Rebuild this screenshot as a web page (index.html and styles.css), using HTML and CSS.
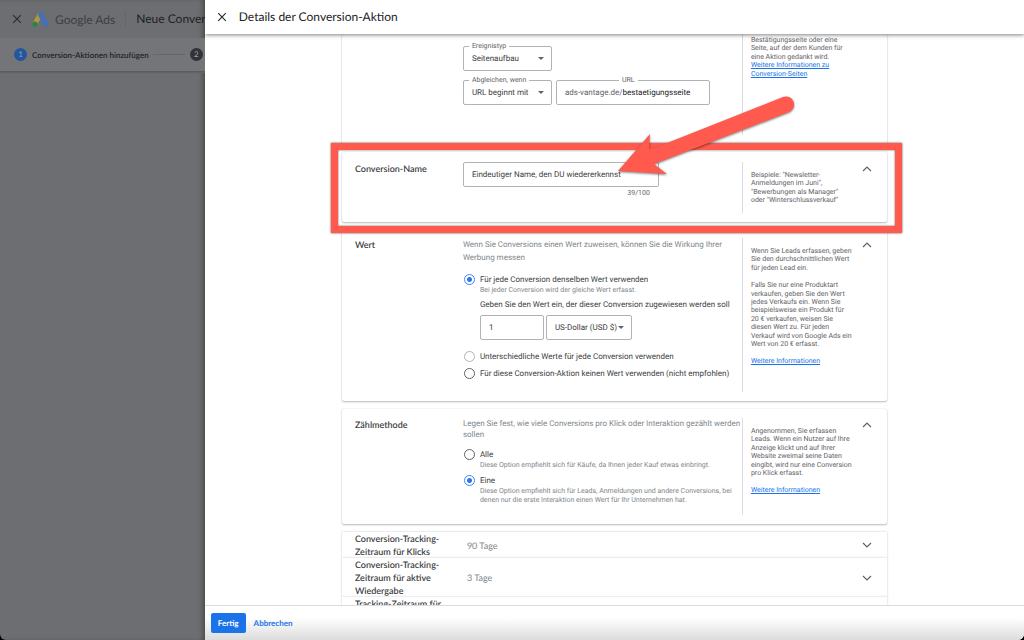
FILE: index.html
```html
<!DOCTYPE html>
<html lang="de">
<head>
<meta charset="utf-8">
<title>Google Ads – Details der Conversion-Aktion</title>
<link rel="stylesheet" href="styles.css">
</head>
<body>
<div class="app">
  <aside class="backdrop">
    <div class="topbar">
      <svg class="close" viewBox="0 0 10 10"><path d="M1.2 1.2l7.6 7.6M8.8 1.2L1.2 8.8"/></svg>
      <svg class="logo" viewBox="0 0 17 15">
        <path d="M7.6 3.4L3 11.6" stroke="#b3983a" stroke-width="4.8" stroke-linecap="round"/>
        <path d="M8.8 2.9L13.8 12" stroke="#4470b8" stroke-width="5.2" stroke-linecap="round"/>
        <circle cx="3" cy="12" r="2.6" fill="#2f8049"/>
      </svg>
      <span class="brand">Google Ads</span>
      <span class="topbar-title">Neue Conversion-Aktion</span>
    </div>
    <div class="stepper">
      <span class="step-dot active">1</span>
      <span class="step-label">Conversion-Aktionen hinzufügen</span>
      <span class="step-line"></span>
      <span class="step-dot">2</span>
    </div>
  </aside>

  <main class="dialog">
    <header class="dialog-head">
      <button class="icon-btn" aria-label="Schließen"><svg class="close" viewBox="0 0 10 10"><path d="M1.2 1.2l7.6 7.6M8.8 1.2L1.2 8.8"/></svg></button>
      <h1>Details der Conversion-Aktion</h1>
    </header>

    <div class="scroller">
      <div class="cards">
        <section class="card card-page">
          <div class="content match">
            <div class="field w-select">
              <label for="event">Ereignistyp</label>
              <select id="event"><option>Seitenaufbau</option></select>
            </div>
            <div class="row">
              <div class="field w-select">
                <label for="rule">Abgleichen, wenn</label>
                <select id="rule"><option>URL beginnt mit</option></select>
              </div>
              <div class="field w-url">
                <label class="centered" for="url">URL</label>
                <span class="prefix">ads-vantage.de/</span>
                <input id="url" value="bestaetigungsseite">
              </div>
            </div>
          </div>
          <div class="help">
            <p>Bestätigungsseite oder eine<br>Seite, auf der dem Kunden für<br>eine Aktion gedankt wird.<br><a href="#">Weitere Informationen zu<br>Conversion-Seiten</a></p>
          </div>
        </section>

        <section class="card card-name">
          <h2>Conversion-Name</h2>
          <div class="content">
            <div class="field w-name">
              <input id="name" aria-label="Conversion-Name" value="Eindeutiger Name, den DU wiedererkennst">
            </div>
            <div class="counter">39/100</div>
          </div>
          <div class="help">
            <p>Beispiele: "Newsletter-<br>Anmeldungen im Juni",<br>"Bewerbungen als Manager"<br>oder "Winterschlussverkauf"</p>
          </div>
          <button class="toggle" aria-label="Einklappen"><svg viewBox="0 0 10 6"><path d="M1 5l4-4 4 4"/></svg></button>
          <div class="highlight"></div>
          <svg class="arrow" viewBox="0 0 190 100">
            <path d="M8 78 L40 41 L39 56 Q47 55 57 50 L173 4 A8 8 0 0 1 179 19 L44 71 L57 81 Z"/>
          </svg>
        </section>

        <section class="card card-value">
          <h2>Wert</h2>
          <div class="content">
            <p class="intro roomy">Wenn Sie Conversions einen Wert zuweisen, können Sie die Wirkung Ihrer Werbung messen</p>
            <div class="options">
              <div class="option">
                <input type="radio" name="value" id="v1" checked>
                <div class="option-body">
                  <label for="v1">Für jede Conversion denselben Wert verwenden</label>
                  <p class="hint">Bei jeder Conversion wird der gleiche Wert erfasst.</p>
                  <label class="amount-label" for="amount">Geben Sie den Wert ein, der dieser Conversion zugewiesen werden soll</label>
                  <div class="row tight">
                    <div class="field w-amount"><input id="amount" value="1"></div>
                    <div class="field w-currency"><select aria-label="Währung"><option>US-Dollar (USD $)</option></select></div>
                  </div>
                </div>
              </div>
              <div class="option after-fields">
                <input type="radio" name="value" id="v2" class="faded">
                <label for="v2">Unterschiedliche Werte für jede Conversion verwenden</label>
              </div>
              <div class="option">
                <input type="radio" name="value" id="v3">
                <label for="v3">Für diese Conversion-Aktion keinen Wert verwenden (nicht empfohlen)</label>
              </div>
            </div>
          </div>
          <div class="help">
            <p>Wenn Sie Leads erfassen, geben<br>Sie den durchschnittlichen Wert<br>für jeden Lead ein.</p>
            <p>Falls Sie nur eine Produktart<br>verkaufen, geben Sie den Wert<br>jedes Verkaufs ein. Wenn Sie<br>beispielsweise ein Produkt für<br>20 € verkaufen, weisen Sie<br>diesen Wert zu. Für jeden<br>Verkauf wird von Google Ads ein<br>Wert von 20 € erfasst.</p>
            <p><a href="#">Weitere Informationen</a></p>
          </div>
          <button class="toggle" aria-label="Einklappen"><svg viewBox="0 0 10 6"><path d="M1 5l4-4 4 4"/></svg></button>
        </section>

        <section class="card card-count">
          <h2>Zählmethode</h2>
          <div class="content">
            <p class="intro">Legen Sie fest, wie viele Conversions pro Klick oder Interaktion gezählt werden sollen</p>
            <div class="options">
              <div class="option">
                <input type="radio" name="count" id="c1">
                <div class="option-body">
                  <label for="c1">Alle</label>
                  <p class="hint">Diese Option empfiehlt sich für Käufe, da Ihnen jeder Kauf etwas einbringt.</p>
                </div>
              </div>
              <div class="option">
                <input type="radio" name="count" id="c2" checked>
                <div class="option-body">
                  <label for="c2">Eine</label>
                  <p class="hint">Diese Option empfiehlt sich für Leads, Anmeldungen und andere Conversions, bei denen nur die erste Interaktion einen Wert für Ihr Unternehmen hat.</p>
                </div>
              </div>
            </div>
          </div>
          <div class="help">
            <p>Angenommen, Sie erfassen<br>Leads. Wenn ein Nutzer auf Ihre<br>Anzeige klickt und auf Ihrer<br>Website zweimal seine Daten<br>eingibt, wird nur eine Conversion<br>pro Klick erfasst.</p>
            <p><a href="#">Weitere Informationen</a></p>
          </div>
          <button class="toggle" aria-label="Einklappen"><svg viewBox="0 0 10 6"><path d="M1 5l4-4 4 4"/></svg></button>
        </section>

        <div class="collapsed-list">
          <section class="collapsed">
            <h2>Conversion-Tracking-Zeitraum für Klicks</h2>
            <span class="summary">90 Tage</span>
            <button class="toggle" aria-label="Ausklappen"><svg viewBox="0 0 10 6"><path d="M1 1l4 4 4-4"/></svg></button>
          </section>
          <section class="collapsed">
            <h2>Conversion-Tracking-Zeitraum für aktive Wiedergabe</h2>
            <span class="summary">3 Tage</span>
            <button class="toggle" aria-label="Ausklappen"><svg viewBox="0 0 10 6"><path d="M1 1l4 4 4-4"/></svg></button>
          </section>
          <section class="collapsed">
            <h2>Tracking-Zeitraum für</h2>
          </section>
        </div>
      </div>
    </div>

    <footer class="dialog-foot">
      <button class="primary">Fertig</button>
      <button class="text-btn">Abbrechen</button>
    </footer>
  </main>
</div>
</body>
</html>
```
FILE: styles.css
```css
* { box-sizing: border-box; }
body {
  margin: 0;
  background: #000;
  font-family: Roboto, sans-serif;
  font-size: 7px;
  color: #3c4043;
  text-rendering: geometricPrecision;
}
h1, h2, p { margin: 0; }
button, input, select { font: inherit; color: inherit; text-rendering: inherit; }
button { border: 0; background: none; padding: 0; cursor: pointer; }
svg { display: block; flex: none; fill: none; }

.app {
  display: grid;
  grid-template-columns: 1fr 4fr;
  height: 100vh;
  overflow: hidden;
}

/* Dimmed page behind the dialog */
.backdrop {
  background: #6c6e71;
  font-family: Lato, sans-serif;
  overflow: hidden;
  white-space: nowrap;
  border-radius: 0 0 0 6px;
  box-shadow: inset -4px 0 5px -2px rgba(0, 0, 0, .35);
}
.topbar {
  display: flex;
  align-items: center;
  height: 38px;
  padding-left: 12px;
}
.close { width: 10px; height: 10px; stroke: #2b2d30; stroke-width: 1.2; }
.logo { width: 17px; height: 15px; margin-left: 10px; }
.brand { margin-left: 6px; font-size: 12px; color: #3b3e42; }
.topbar-title {
  margin-left: 10px;
  padding-left: 10px;
  border-left: 1px solid #64666a;
  font-size: 12px;
  line-height: 16px;
  color: #1d1f22;
}
.stepper {
  display: flex;
  align-items: center;
  height: 34px;
  padding-left: 14px;
  background: #737578;
  border-bottom: 1px solid #5a5c5e;
  box-shadow: 0 1px 1px #626467;
}
.step-dot {
  flex: none;
  width: 13px;
  height: 13px;
  border-radius: 50%;
  background: #313336;
  color: #9b9ea2;
  font-size: 8px;
  line-height: 13px;
  text-align: center;
}
.step-dot.active { background: #24569f; }
.step-label { margin-left: 5px; font-size: 8px; font-weight: 600; color: #1d1f22; }
.step-line { flex: none; width: 32px; height: 1px; margin: 0 5px 0 4px; background: #65676a; }

/* Dialog frame */
.dialog {
  display: flex;
  flex-direction: column;
  min-width: 0;
  min-height: 0;
  background: #fff;
  border-radius: 0 0 6px 0;
  overflow: hidden;
}
.dialog-head {
  position: relative;
  z-index: 2;
  display: flex;
  align-items: center;
  flex: none;
  height: 34px;
  padding: 0 12px;
  gap: 12px;
  background: #fff;
  box-shadow: 0 1px 4px rgba(0, 0, 0, .5);
}
.dialog-head h1 { font: 400 12px/16px Lato, sans-serif; color: #202124; }
.scroller { flex: 1; min-height: 0; overflow: hidden; }
.cards { max-width: 545px; margin: 0 auto; }
.dialog-foot {
  display: flex;
  align-items: center;
  flex: none;
  height: 35px;
  padding: 0 6px;
  gap: 8px;
  border-top: 1px solid #dadce0;
  background: linear-gradient(#fff 35%, #dcdcdc);
  font: 700 8px/20px Lato, sans-serif;
}
.primary { height: 20px; padding: 0 7px; border-radius: 2px; background: #1a73e8; color: #fff; }
.text-btn { color: #1a73e8; }

/* Cards */
.card {
  position: relative;
  display: grid;
  grid-template-columns: 108px 1fr 112px 27px;
  margin-bottom: 8px;
  padding: 9px 6px 9px 13px;
  border-radius: 2px;
  background: #fff;
  box-shadow: 0 1px 2px rgba(60, 64, 67, .35), 0 0 1px rgba(60, 64, 67, .25);
}
h2 { font: 600 9px/13px Lato, sans-serif; color: #3c4043; }
.card > .content { grid-column: 2; }
.card > .help {
  grid-column: 3;
  padding: 9px 0 8px 8px;
  border-left: 1px solid #dadce0;
  line-height: 1.2;
  white-space: nowrap;
  color: #5f6368;
}
.help p + p { margin-top: 9px; }
a { color: #1a73e8; text-decoration: underline; }
.toggle { width: 27px; height: 13px; display: grid; place-items: center; }
.toggle svg { width: 10px; height: 6px; stroke: #5f6368; stroke-width: 1.2; }

.card-page { height: 110px; padding-top: 0; }
.card-page > .help { padding-top: 2px; }
.match { display: flex; flex-direction: column; gap: 9px; padding-top: 12px; }
.card-name { z-index: 1; height: 70px; margin-bottom: 7px; padding-top: 10px; }
.card-value { min-height: 172px; }
.card-count { min-height: 115px; }

/* Outlined form fields */
.row { display: flex; gap: 4px; }
.row.tight { gap: 2px; }
.field {
  position: relative;
  display: flex;
  align-items: center;
  height: 25px;
  border: 1px solid #b0b3b6;
  border-radius: 2px;
  background: #fff;
  font-size: 8px;
}
.field > label {
  position: absolute;
  top: -5px;
  left: 5px;
  padding: 0 3px;
  background: #fff;
  font-size: 7px;
  line-height: 9px;
  color: #5f6368;
}
.field > label.centered { left: 62px; }
.field input, .field select {
  width: 100%;
  min-width: 0;
  height: 100%;
  padding: 0 8px;
  border: 0;
  outline: 0;
  background: none;
  appearance: none;
}
.field:has(select)::after {
  content: "";
  position: absolute;
  right: 7px;
  top: 10px;
  border: 3px solid transparent;
  border-top-color: #5f6368;
  border-bottom: 0;
}
.field .prefix { padding-left: 8px; color: #5f6368; }
.field .prefix + input { flex: 1; padding: 0; color: #202124; }
.w-select { width: 89px; }
.w-url { width: 154px; }
.w-name { width: 196px; }
.w-amount { width: 64px; }
.w-currency { width: 86px; }
.counter { width: 187px; margin-top: 2px; text-align: right; line-height: 9px; color: #5f6368; }

/* Radio groups */
.intro { font-size: 8px; line-height: 11px; color: #80868b; }
.intro.roomy { line-height: 13px; }
.options { display: flex; flex-direction: column; gap: 6px; margin-top: 9px; }
.card-value .options { margin-top: 10px; }
.option { display: flex; gap: 5px; padding-left: 1px; }
.option label { font-size: 8px; line-height: 11px; color: #3c4043; white-space: nowrap; }
.option .option-body > label { display: block; }
.option .amount-label { margin: 5px 0; }
.after-fields { margin-top: 5px; }
.hint { line-height: 1.2; padding-top: 1px; color: #80868b; }
input[type="radio"] {
  flex: none;
  width: 11px;
  height: 11px;
  margin: 0;
  appearance: none;
  border: 1px solid #5f6368;
  border-radius: 50%;
  background: #fff;
}
input[type="radio"].faded { border-color: #b0b3b6; }
input[type="radio"]:checked {
  border-color: #4285f4;
  background: radial-gradient(circle, #2b76f0 0 2px, #fff 3px);
}

/* Collapsed rows */
.collapsed {
  display: grid;
  grid-template-columns: 112px 1fr 27px;
  align-items: center;
  padding: 0 6px 0 13px;
  background: #fff;
  box-shadow: 0 0 2px rgba(60, 64, 67, .3);
}
.collapsed h2 { padding-right: 12px; }
.summary { font: 400 9px/13px Lato, sans-serif; color: #80868b; }

/* Annotations over the name card */
.highlight {
  position: absolute;
  inset: -9px -15px -11px -11px;
  border: 7px solid #ff5a4d;
  box-shadow: 0 0 2px rgba(0, 0, 0, .7), inset 0 0 2px rgba(0, 0, 0, .7);
  pointer-events: none;
}
.arrow {
  position: absolute;
  left: 268px;
  top: -59px;
  width: 190px;
  height: 100px;
  fill: #ff5a4d;
  filter: drop-shadow(0 1px 1px rgba(0, 0, 0, .5));
  pointer-events: none;
}
```
